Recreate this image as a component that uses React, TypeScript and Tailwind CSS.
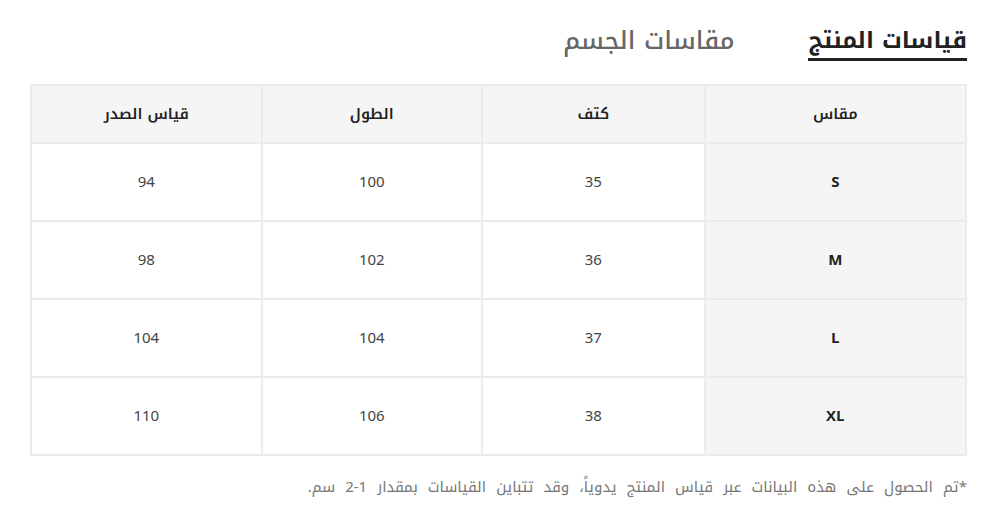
import React from "react";

const rows = [
  ["S", "35", "100", "94"],
  ["M", "36", "102", "98"],
  ["L", "37", "104", "104"],
  ["XL", "38", "106", "110"],
];

export default function App() {
  return (
    <div
      dir="rtl"
      className="w-[1000px] h-[516px] bg-white pt-[24px] pr-[33px] pl-[33px]"
      style={{ fontFamily: '"Noto Kufi Arabic", "Noto Sans Arabic", "DejaVu Sans", sans-serif' }}
    >
      <div className="flex items-start gap-[74px] h-[60px]">
        <div className="text-[23px] leading-[34px] font-bold text-[#222] border-b-[3px] border-[#222]">
          قياسات المنتج
        </div>
        <div className="text-[25px] leading-[34px] font-medium text-[#666]">مقاسات الجسم</div>
      </div>
      <table className="w-[937px] border-collapse text-center">
        <thead>
          <tr className="h-[58px] bg-[#f5f5f5]">
            <th className="w-[262px] border-2 border-[#ebebeb] text-[15px] font-semibold text-[#222]">مقاس</th>
            <th className="w-[223px] border-2 border-[#ebebeb] text-[15px] font-semibold text-[#222]">كتف</th>
            <th className="w-[221px] border-2 border-[#ebebeb] text-[15px] font-semibold text-[#222]">الطول</th>
            <th className="w-[231px] border-2 border-[#ebebeb] text-[15px] font-semibold text-[#222]">قياس الصدر</th>
          </tr>
        </thead>
        <tbody>
          {rows.map((r) => (
            <tr key={r[0]} className="h-[78px]">
              <td className="bg-[#f5f5f5] border-2 border-[#ebebeb] text-[15px] font-bold text-[#222]">{r[0]}</td>
              <td className="border-2 border-[#ebebeb] text-[15px] text-[#444]">{r[1]}</td>
              <td className="border-2 border-[#ebebeb] text-[15px] text-[#444]">{r[2]}</td>
              <td className="border-2 border-[#ebebeb] text-[15px] text-[#444]">{r[3]}</td>
            </tr>
          ))}
        </tbody>
      </table>
      <p className="mt-[20px] text-[15px] text-[#777] [word-spacing:5px]">
        *تم الحصول على هذه البيانات عبر قياس المنتج يدوياً، وقد تتباين القياسات بمقدار 1-2 سم.
      </p>
    </div>
  );
}
